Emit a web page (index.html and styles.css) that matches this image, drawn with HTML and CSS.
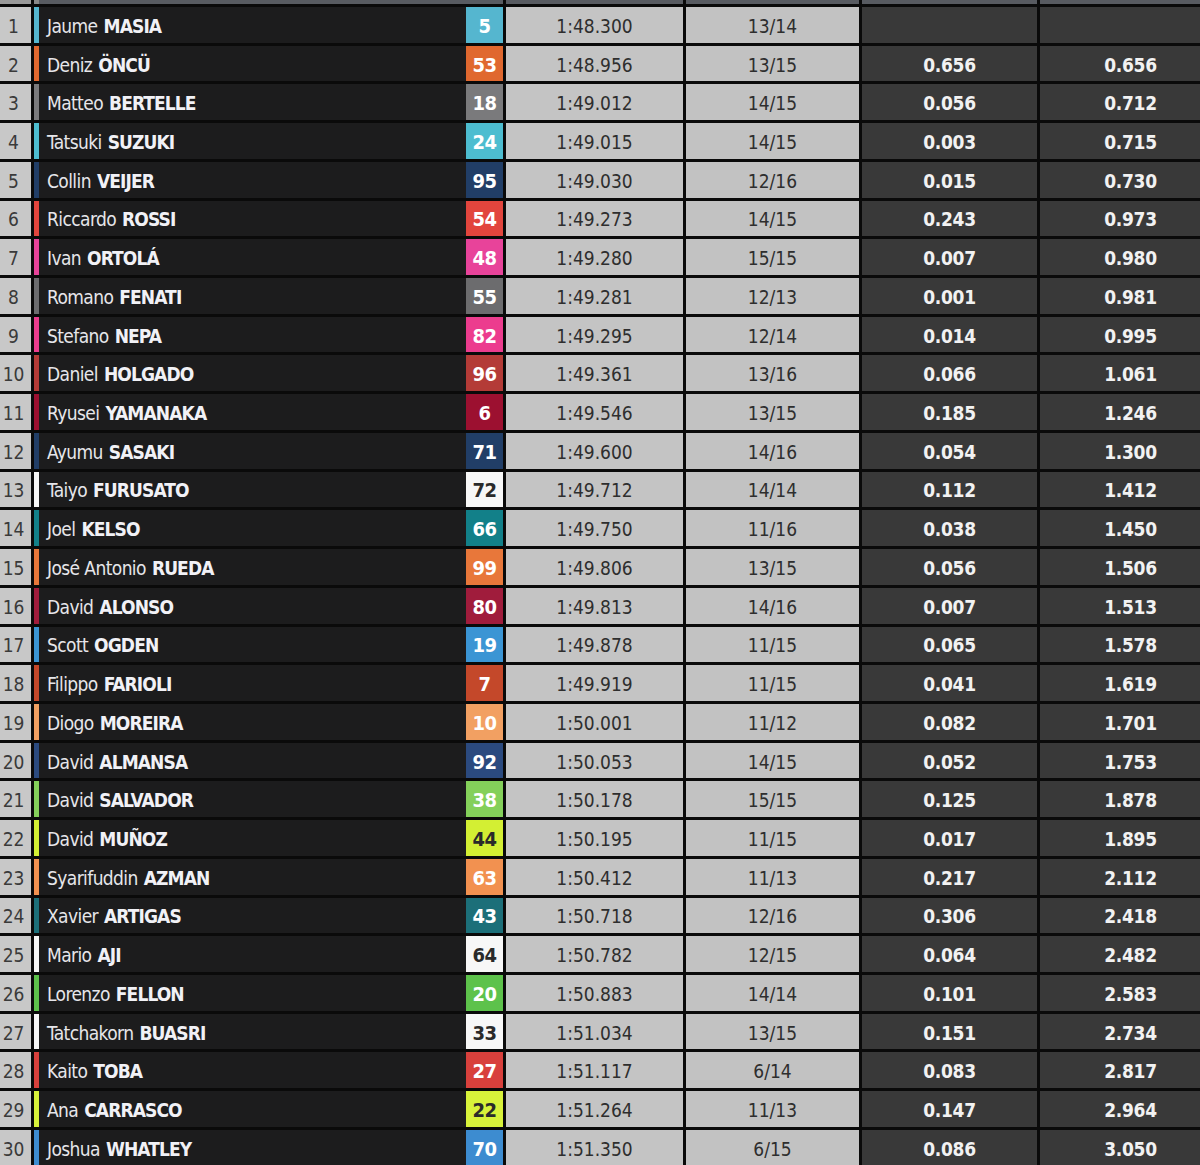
FILE: index.html
```html
<!DOCTYPE html>
<html>
<head>
<meta charset="utf-8">
<link rel="stylesheet" href="styles.css">
</head>
<body>
<div class="board">
  <div class="row head">
    <div class="pos"></div><div class="name"></div><div class="cell"></div><div class="cell"></div><div class="cell"></div><div class="cell"></div>
  </div>
  <div class="row t-cyan"><div class="pos">1</div><div class="name"><span class="first">Jaume</span><b>MASIA</b><span class="num">5</span></div><div class="time">1:48.300</div><div class="laps">13/14</div><div class="gap"></div><div class="gap"></div></div>
  <div class="row t-orange"><div class="pos">2</div><div class="name"><span class="first">Deniz</span><b>ÖNCÜ</b><span class="num">53</span></div><div class="time">1:48.956</div><div class="laps">13/15</div><div class="gap">0.656</div><div class="gap">0.656</div></div>
  <div class="row t-gray"><div class="pos">3</div><div class="name"><span class="first">Matteo</span><b>BERTELLE</b><span class="num">18</span></div><div class="time">1:49.012</div><div class="laps">14/15</div><div class="gap">0.056</div><div class="gap">0.712</div></div>
  <div class="row t-cyan2"><div class="pos">4</div><div class="name"><span class="first">Tatsuki</span><b>SUZUKI</b><span class="num">24</span></div><div class="time">1:49.015</div><div class="laps">14/15</div><div class="gap">0.003</div><div class="gap">0.715</div></div>
  <div class="row t-navy"><div class="pos">5</div><div class="name"><span class="first">Collin</span><b>VEIJER</b><span class="num">95</span></div><div class="time">1:49.030</div><div class="laps">12/16</div><div class="gap">0.015</div><div class="gap">0.730</div></div>
  <div class="row t-red"><div class="pos">6</div><div class="name"><span class="first">Riccardo</span><b>ROSSI</b><span class="num">54</span></div><div class="time">1:49.273</div><div class="laps">14/15</div><div class="gap">0.243</div><div class="gap">0.973</div></div>
  <div class="row t-pink"><div class="pos">7</div><div class="name"><span class="first">Ivan</span><b>ORTOLÁ</b><span class="num">48</span></div><div class="time">1:49.280</div><div class="laps">15/15</div><div class="gap">0.007</div><div class="gap">0.980</div></div>
  <div class="row t-gray2"><div class="pos">8</div><div class="name"><span class="first">Romano</span><b>FENATI</b><span class="num">55</span></div><div class="time">1:49.281</div><div class="laps">12/13</div><div class="gap">0.001</div><div class="gap">0.981</div></div>
  <div class="row t-pink2"><div class="pos">9</div><div class="name"><span class="first">Stefano</span><b>NEPA</b><span class="num">82</span></div><div class="time">1:49.295</div><div class="laps">12/14</div><div class="gap">0.014</div><div class="gap">0.995</div></div>
  <div class="row t-brick"><div class="pos">10</div><div class="name"><span class="first">Daniel</span><b>HOLGADO</b><span class="num">96</span></div><div class="time">1:49.361</div><div class="laps">13/16</div><div class="gap">0.066</div><div class="gap">1.061</div></div>
  <div class="row t-maroon"><div class="pos">11</div><div class="name"><span class="first">Ryusei</span><b>YAMANAKA</b><span class="num">6</span></div><div class="time">1:49.546</div><div class="laps">13/15</div><div class="gap">0.185</div><div class="gap">1.246</div></div>
  <div class="row t-navy"><div class="pos">12</div><div class="name"><span class="first">Ayumu</span><b>SASAKI</b><span class="num">71</span></div><div class="time">1:49.600</div><div class="laps">14/16</div><div class="gap">0.054</div><div class="gap">1.300</div></div>
  <div class="row t-white"><div class="pos">13</div><div class="name"><span class="first">Taiyo</span><b>FURUSATO</b><span class="num">72</span></div><div class="time">1:49.712</div><div class="laps">14/14</div><div class="gap">0.112</div><div class="gap">1.412</div></div>
  <div class="row t-teal"><div class="pos">14</div><div class="name"><span class="first">Joel</span><b>KELSO</b><span class="num">66</span></div><div class="time">1:49.750</div><div class="laps">11/16</div><div class="gap">0.038</div><div class="gap">1.450</div></div>
  <div class="row t-orange2"><div class="pos">15</div><div class="name"><span class="first">José Antonio</span><b>RUEDA</b><span class="num">99</span></div><div class="time">1:49.806</div><div class="laps">13/15</div><div class="gap">0.056</div><div class="gap">1.506</div></div>
  <div class="row t-maroon2"><div class="pos">16</div><div class="name"><span class="first">David</span><b>ALONSO</b><span class="num">80</span></div><div class="time">1:49.813</div><div class="laps">14/16</div><div class="gap">0.007</div><div class="gap">1.513</div></div>
  <div class="row t-blue"><div class="pos">17</div><div class="name"><span class="first">Scott</span><b>OGDEN</b><span class="num">19</span></div><div class="time">1:49.878</div><div class="laps">11/15</div><div class="gap">0.065</div><div class="gap">1.578</div></div>
  <div class="row t-rust"><div class="pos">18</div><div class="name"><span class="first">Filippo</span><b>FARIOLI</b><span class="num">7</span></div><div class="time">1:49.919</div><div class="laps">11/15</div><div class="gap">0.041</div><div class="gap">1.619</div></div>
  <div class="row t-peach"><div class="pos">19</div><div class="name"><span class="first">Diogo</span><b>MOREIRA</b><span class="num">10</span></div><div class="time">1:50.001</div><div class="laps">11/12</div><div class="gap">0.082</div><div class="gap">1.701</div></div>
  <div class="row t-navy2"><div class="pos">20</div><div class="name"><span class="first">David</span><b>ALMANSA</b><span class="num">92</span></div><div class="time">1:50.053</div><div class="laps">14/15</div><div class="gap">0.052</div><div class="gap">1.753</div></div>
  <div class="row t-green"><div class="pos">21</div><div class="name"><span class="first">David</span><b>SALVADOR</b><span class="num">38</span></div><div class="time">1:50.178</div><div class="laps">15/15</div><div class="gap">0.125</div><div class="gap">1.878</div></div>
  <div class="row t-lime"><div class="pos">22</div><div class="name"><span class="first">David</span><b>MUÑOZ</b><span class="num">44</span></div><div class="time">1:50.195</div><div class="laps">11/15</div><div class="gap">0.017</div><div class="gap">1.895</div></div>
  <div class="row t-orange3"><div class="pos">23</div><div class="name"><span class="first">Syarifuddin</span><b>AZMAN</b><span class="num">63</span></div><div class="time">1:50.412</div><div class="laps">11/13</div><div class="gap">0.217</div><div class="gap">2.112</div></div>
  <div class="row t-teal2"><div class="pos">24</div><div class="name"><span class="first">Xavier</span><b>ARTIGAS</b><span class="num">43</span></div><div class="time">1:50.718</div><div class="laps">12/16</div><div class="gap">0.306</div><div class="gap">2.418</div></div>
  <div class="row t-white"><div class="pos">25</div><div class="name"><span class="first">Mario</span><b>AJI</b><span class="num">64</span></div><div class="time">1:50.782</div><div class="laps">12/15</div><div class="gap">0.064</div><div class="gap">2.482</div></div>
  <div class="row t-green2"><div class="pos">26</div><div class="name"><span class="first">Lorenzo</span><b>FELLON</b><span class="num">20</span></div><div class="time">1:50.883</div><div class="laps">14/14</div><div class="gap">0.101</div><div class="gap">2.583</div></div>
  <div class="row t-white"><div class="pos">27</div><div class="name"><span class="first">Tatchakorn</span><b>BUASRI</b><span class="num">33</span></div><div class="time">1:51.034</div><div class="laps">13/15</div><div class="gap">0.151</div><div class="gap">2.734</div></div>
  <div class="row t-red2"><div class="pos">28</div><div class="name"><span class="first">Kaito</span><b>TOBA</b><span class="num">27</span></div><div class="time">1:51.117</div><div class="laps">6/14</div><div class="gap">0.083</div><div class="gap">2.817</div></div>
  <div class="row t-lime2"><div class="pos">29</div><div class="name"><span class="first">Ana</span><b>CARRASCO</b><span class="num">22</span></div><div class="time">1:51.264</div><div class="laps">11/13</div><div class="gap">0.147</div><div class="gap">2.964</div></div>
  <div class="row t-blue2"><div class="pos">30</div><div class="name"><span class="first">Joshua</span><b>WHATLEY</b><span class="num">70</span></div><div class="time">1:51.350</div><div class="laps">6/15</div><div class="gap">0.086</div><div class="gap">3.050</div></div>
</div>
</body>
</html>
```

FILE: styles.css
```css
html, body {
  margin: 0;
  padding: 0;
  background: #0a0a0a;
}
body {
  width: 1200px;
  height: 1165px;
  overflow: hidden;
  font-family: "DejaVu Sans Condensed", "Open Sans", "DejaVu Sans", sans-serif;
}
.board {
  display: flex;
  flex-direction: column;
  gap: 3px;
  width: 1220px;
}
.row {
  display: grid;
  grid-template-columns: 31px 469px 177px 173px 175px 177px;
  column-gap: 3px;
  height: 35.72px;
  --team: #888;
  --ink: #ffffff;
}
.row.head {
  height: 4px;
}
.head > div {
  background: #585b61;
}
.head > .pos {
  background: #9a9a9a;
}
.pos {
  background: #c8c8c8;
  color: #3a3a3a;
  font-size: 19px;
  display: flex;
  align-items: center;
  justify-content: center;
  padding: 2px 4px 0 0;
}
.name {
  background: #1c1c1d;
  border-left: 5px solid var(--team);
  display: flex;
  align-items: center;
  padding-left: 8px;
  color: #e6e6ea;
  font-size: 19px;
  letter-spacing: -0.6px;
  white-space: pre;
}
.first {
  font-weight: 400;
  margin-right: 6px;
  padding-top: 2px;
}
.name b {
  font-weight: 700;
  color: #f1f1f6;
  letter-spacing: -0.9px;
  padding-top: 2px;
}
.num {
  margin-left: auto;
  width: 37px;
  height: 100%;
  background: var(--team);
  color: var(--ink);
  display: flex;
  align-items: center;
  justify-content: center;
  font-weight: 700;
  font-size: 20px;
  letter-spacing: -0.5px;
  padding-top: 2px;
  box-sizing: border-box;
}
.time, .laps {
  background: #c4c4c4;
  color: #2e2e2e;
  font-size: 19px;
  display: flex;
  align-items: center;
  justify-content: center;
  padding-top: 2px;
}
.laps {
  background: #c2c2c2;
}
.gap {
  background: #393939;
  color: #f2f2f2;
  font-size: 19px;
  font-weight: 700;
  letter-spacing: -0.3px;
  display: flex;
  align-items: center;
  justify-content: center;
  padding-top: 2px;
}
.gap + .gap {
  padding-left: 4px;
}

.t-cyan { --team: #55b6cf; }
.t-cyan2 { --team: #4dbdd0; }
.t-orange { --team: #e0682f; }
.t-orange2 { --team: #e8773a; }
.t-orange3 { --team: #f29150; }
.t-peach { --team: #f2a062; }
.t-gray { --team: #7a7a7c; }
.t-gray2 { --team: #6c6c6e; }
.t-navy { --team: #213e67; }
.t-navy2 { --team: #2b4a7f; }
.t-red { --team: #e2453d; }
.t-red2 { --team: #d8403c; }
.t-pink { --team: #e8439a; }
.t-pink2 { --team: #ec3c8e; }
.t-brick { --team: #b43b37; }
.t-maroon { --team: #9c1030; }
.t-maroon2 { --team: #a01c3c; }
.t-teal { --team: #128089; }
.t-teal2 { --team: #1c6f79; }
.t-blue { --team: #3b95d4; }
.t-blue2 { --team: #3d8cd0; }
.t-rust { --team: #c4482a; }
.t-green { --team: #84d05a; }
.t-green2 { --team: #5dc24b; }
.t-lime { --team: #d3ef33; --ink: #2a2a2a; }
.t-lime2 { --team: #d8f23a; --ink: #2a2a2a; }
.t-white { --team: #f7f7f7; --ink: #2a2a2a; }
```
